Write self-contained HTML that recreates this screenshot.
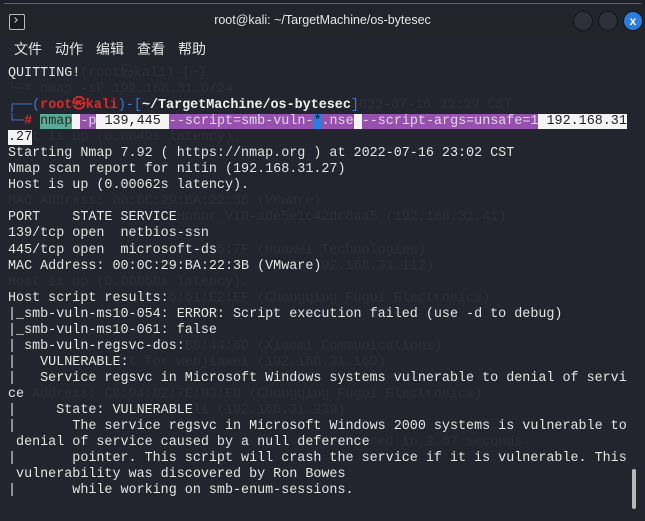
<!DOCTYPE html>
<html><head><meta charset="utf-8"><style>
html,body{margin:0;padding:0;width:645px;height:520px;overflow:hidden;background:#1e2029;}
.win{position:absolute;left:0;top:3px;width:645px;height:517px;background:#23252e;border-top:1px solid #2f6fb5;border-radius:6px 6px 0 0;}
.title{position:absolute;left:0;top:0;width:645px;height:36px;background:#22242c;}
.title .t{position:absolute;left:0;right:0;top:9px;text-align:center;color:#e6e6e6;font:12.5px "Liberation Sans","Noto Sans CJK SC",sans-serif;}
.ticon{position:absolute;left:9px;top:10px;width:14px;height:14px;border:1px solid #bbb;border-radius:2px;background:#1a1b20;}
.ticon:after{content:"";position:absolute;left:3px;top:3px;width:3px;height:3px;border-left:1px solid #ccc;border-bottom:1px solid #ccc;transform:rotate(-135deg);}
.btn{position:absolute;top:7px;width:18px;height:18px;border-radius:50%;background:#2e3039;border:1px solid #14151a;}
.x{background:#2a7de0;color:#fff;font:bold 12px "Liberation Sans",sans-serif;text-align:center;line-height:18px;}
.menu{position:absolute;left:14px;top:35px;color:#e6e6e6;font:14px "Liberation Sans","Noto Sans CJK SC",sans-serif;}
.menu span{margin-right:13px;}
pre{position:absolute;left:8px;top:62px;margin:0;font:13.4px/16.05px "Liberation Mono","DejaVu Sans Mono",monospace;color:#e4e4e4;white-space:pre;}
.g{color:#2c2e37;}
.b{color:#3a7ad8;}
.r{color:#e02828;font-weight:bold;}
.w{font-weight:bold;color:#f0f0f0;}
.tl{background:#5aab95;color:#2a2a2a;}
.pu{background:#9650ad;color:#e0d8e6;}
.wh{background:#f4f4f4;color:#222;}
.bl{background:#2a7de0;color:#111;}
.sb{position:absolute;left:632px;top:465px;width:4px;height:40px;background:#b8b8b8;border-radius:2px;}
</style></head><body>
<div class="win">
<div class="title"><div class="ticon"></div><div class="t">root@kali: ~/TargetMachine/os-bytesec</div>
<div class="btn" style="left:573px"></div><div class="btn" style="left:598px"></div><div class="btn x" style="left:623px">x</div></div>
<div class="menu"><span>文件</span><span>动作</span><span>编辑</span><span>查看</span><span>帮助</span></div>
<pre>QUITTING!<span class="g">(root㉿kali)-[~]</span>
<span class="g">└─# nmap -sP 192.168.31.0/24</span>
<span class="b">┌──(</span><span class="r">root㉿kali</span><span class="b">)-[</span><span class="w">~/TargetMachine/os-bytesec</span><span class="b">]</span><span class="g">022-07-16 22:29 CST</span>
<span class="b">└─</span><span class="r">#</span> <span class="tl">nmap</span><span class="wh"> </span><span class="pu">-p</span><span class="wh"> 139,445 </span><span class="pu">--script=smb-vuln-</span><span class="bl">*</span><span class="pu">.nse</span><span class="wh"> </span><span class="pu">--script-args=unsafe=1</span><span class="wh"> 192.168.31</span>
<span class="wh">.27</span><span class="g">t is up (0.0049s latency).</span>
Starting Nmap 7.92 ( https://nmap.org ) at 2022-07-16 23:02 CST
Nmap scan report for nitin (192.168.31.27)
Host is up (0.00062s latency).
<span class="g">MAC Address: 00:0C:29:BA:22:3B (VMware)</span>
PORT    STATE SERVICE<span class="g">Honor_V10-ade5e1c42dc8aa5 (192.168.31.41)</span>
139/tcp open  netbios-ssn
445/tcp open  microsoft-ds<span class="g">5:7F (Huawei Technologies)</span>
MAC Address: 00:0C:29:BA:22:3B (VMware)<span class="g">92.168.31.112)</span>
<span class="g">Host is up (0.00050s latency).</span>
Host script results:<span class="g">5:51:E2:EF (Chongqing Fugui Electronics)</span>
|_smb-vuln-ms10-054: ERROR: Script execution failed (use -d to debug)
|_smb-vuln-ms10-061: false
| smb-vuln-regsvc-dos:<span class="g">B8:44:6D (Xiaomi Communications)</span>
|   VULNERABLE:<span class="g">t for wenjiawei (192.168.31.169)</span>
|   Service regsvc in Microsoft Windows systems vulnerable to denial of servi
ce<span class="g"> Address: C8:94:02:7E:93:E9 (Chongqing Fugui Electronics)</span>
|     State: VULNERABLE<span class="g">li (192.168.31.239)</span>
|       The service regsvc in Microsoft Windows 2000 systems is vulnerable to
 denial of service caused by a null deference<span class="g">ned in 2.57 seconds</span>
|       pointer. This script will crash the service if it is vulnerable. This
 vulnerability was discovered by Ron Bowes
|       while working on smb-enum-sessions.</pre>
<div class="sb"></div>
</div>
</body></html>
